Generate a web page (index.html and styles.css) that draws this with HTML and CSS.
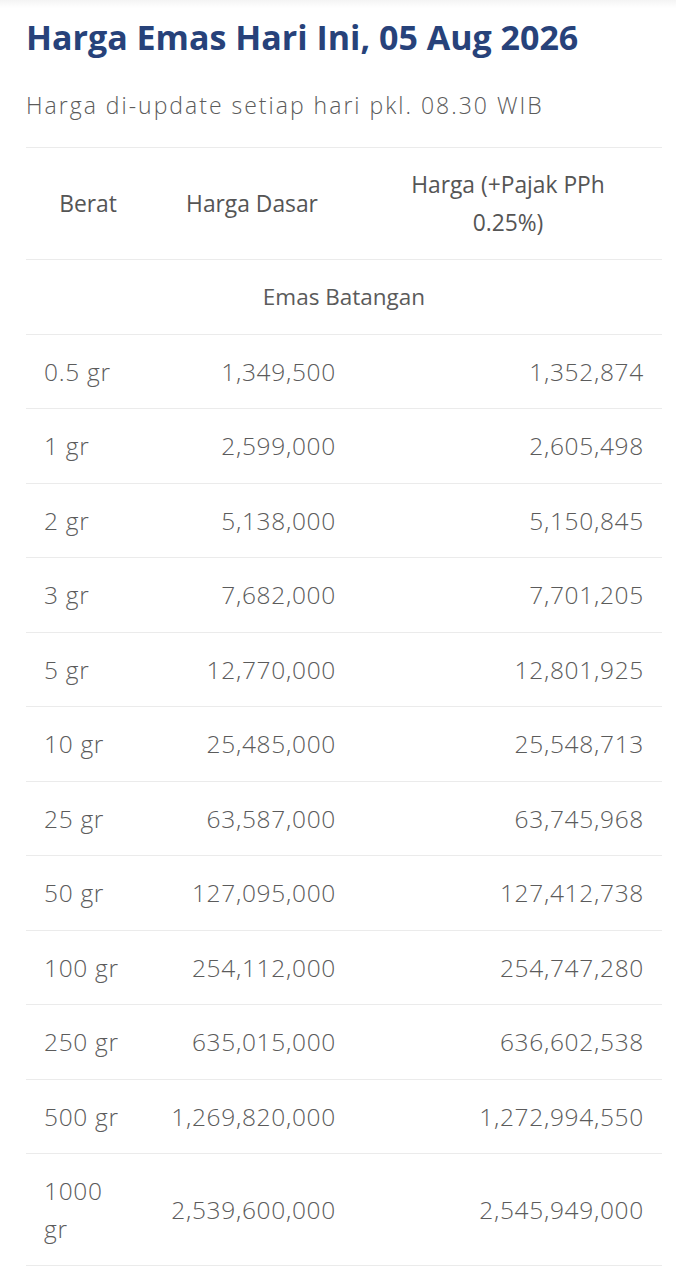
FILE: index.html
```html
<!DOCTYPE html>
<html lang="id">
<head>
<meta charset="utf-8">
<title>Harga Emas Hari Ini</title>
<link rel="stylesheet" href="styles.css">
</head>
<body>
<div class="topband"></div>
<main class="content">
  <h1 class="title">Harga Emas Hari Ini, 05 Aug 2026</h1>
  <p class="subtitle">Harga di-update setiap hari pkl. 08.30 WIB</p>
  <table class="prices">
    <thead>
      <tr>
        <th class="c1">Berat</th>
        <th class="c2">Harga Dasar</th>
        <th class="c3">Harga (+Pajak PPh 0.25%)</th>
      </tr>
    </thead>
    <tbody>
      <tr class="section"><td colspan="3">Emas Batangan</td></tr>
      <tr><td>0.5 gr</td><td class="num">1,349,500</td><td class="num">1,352,874</td></tr>
      <tr><td>1 gr</td><td class="num">2,599,000</td><td class="num">2,605,498</td></tr>
      <tr><td>2 gr</td><td class="num">5,138,000</td><td class="num">5,150,845</td></tr>
      <tr><td>3 gr</td><td class="num">7,682,000</td><td class="num">7,701,205</td></tr>
      <tr><td>5 gr</td><td class="num">12,770,000</td><td class="num">12,801,925</td></tr>
      <tr><td>10 gr</td><td class="num">25,485,000</td><td class="num">25,548,713</td></tr>
      <tr><td>25 gr</td><td class="num">63,587,000</td><td class="num">63,745,968</td></tr>
      <tr><td>50 gr</td><td class="num">127,095,000</td><td class="num">127,412,738</td></tr>
      <tr><td>100 gr</td><td class="num">254,112,000</td><td class="num">254,747,280</td></tr>
      <tr><td>250 gr</td><td class="num">635,015,000</td><td class="num">636,602,538</td></tr>
      <tr><td>500 gr</td><td class="num">1,269,820,000</td><td class="num">1,272,994,550</td></tr>
      <tr><td>1000 gr</td><td class="num">2,539,600,000</td><td class="num">2,545,949,000</td></tr>
    </tbody>
  </table>
</main>
</body>
</html>
```
FILE: styles.css
```css
html, body {
  margin: 0;
  padding: 0;
  background: #ffffff;
}
body {
  font-family: "Open Sans", "Noto Sans", sans-serif;
  color: #5b5b5b;
}
.topband {
  height: 8px;
  background: linear-gradient(#f4f4f4, #ffffff);
}
.content {
  padding: 0 14px 0 26px;
}
.title {
  margin: 8px 0 0 0;
  font-size: 34px;
  line-height: 42px;
  font-weight: 700;
  color: #27427a;
  letter-spacing: 0;
}
.subtitle {
  margin: 32px 0 0 0;
  font-size: 23px;
  line-height: 30px;
  font-weight: 300;
  letter-spacing: 2px;
  color: #5b5b5b;
}
.prices {
  width: 100%;
  margin-top: 27px;
  border-collapse: collapse;
  border-top: 1px solid #ebebeb;
  table-layout: fixed;
}
.prices th,
.prices td {
  border-bottom: 1px solid #ebebeb;
  padding: 18px 18px;
  line-height: 37.5px;
  vertical-align: middle;
}
.prices th {
  padding: 18px 24px;
  font-size: 22.8px;
  font-weight: 400;
  text-align: center;
  color: #555555;
}
.prices td {
  font-size: 24.5px;
  font-weight: 300;
  letter-spacing: 0.7px;
  color: #5b5b5b;
}
.prices td:first-child {
  padding-right: 24px;
}
.c1 { width: 76px; }
.c2 { width: 156px; }
.prices .section td {
  text-align: center;
  font-size: 22.5px;
  font-weight: 400;
  letter-spacing: 0;
  padding: 18px;
}
.prices .num {
  text-align: right;
}
```
